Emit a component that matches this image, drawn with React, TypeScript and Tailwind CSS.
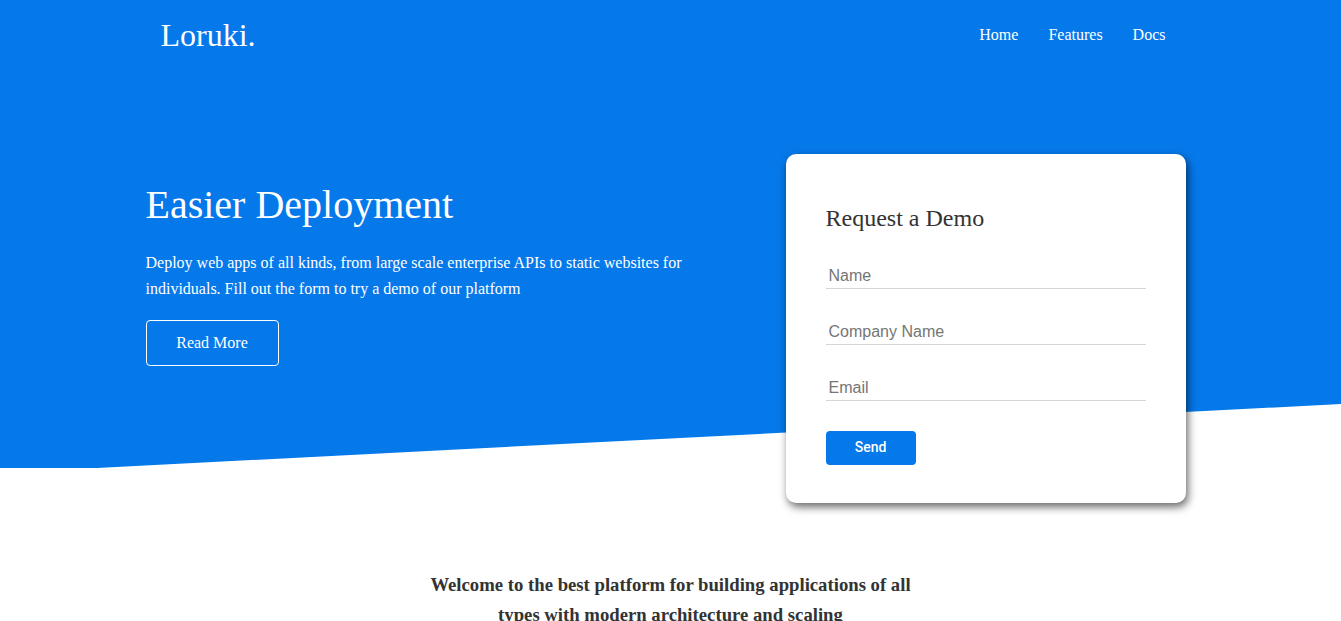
const serif = "font-['Liberation_Serif','Times_New_Roman',serif]";

function Navbar() {
  return (
    <header className="flex h-[65px] items-center justify-between pl-[15px] pr-[20px]">
      <h1 className="mt-[6px] text-[32px] leading-[1.2] text-white">Loruki.</h1>
      <nav className="mt-[4px]">
        <ul className="flex gap-[30px] text-[16px] leading-[1.2] text-white">
          <li>Home</li>
          <li>Features</li>
          <li>Docs</li>
        </ul>
      </nav>
    </header>
  );
}

function DemoForm() {
  const fields = ["Name", "Company Name", "Email"];
  return (
    <div className="w-[400px] shrink-0 rounded-[10px] bg-white px-[40px] pb-[38px] pt-[50px] shadow-[2px_4px_9px_rgba(0,0,0,0.6)]">
      <h2 className="text-[24px] leading-[28.8px] text-[#333]">Request a Demo</h2>
      <form className="mt-[31px] flex flex-col gap-[31px]" onSubmit={(e) => e.preventDefault()}>
        {fields.map((field) => (
          <input
            key={field}
            type="text"
            placeholder={field}
            className="w-full border-b border-[#d6d6d6] px-[3px] py-[3px] font-['Liberation_Sans',Arial,sans-serif] text-[16px] leading-[18px] text-[#333] outline-none placeholder:text-[#757575]"
          />
        ))}
      </form>
      <button className="mt-[30px] h-[34px] w-[90px] rounded-[4px] bg-[#0578ea] font-['Roboto',Arial,sans-serif] text-[14px] font-medium text-white">
        Send
      </button>
    </div>
  );
}

export default function App() {
  return (
    <div className={`${serif} min-h-[621px] bg-white`}>
      <section className="relative h-[468px]">
        <div className="absolute inset-0 bg-[#0578ea] [clip-path:polygon(0_0,100%_0,100%_404px,97px_468px,0_468px)]" />
        <div className="relative mx-auto w-[1040px] -translate-x-[5px]">
          <Navbar />
          <div className="mt-[89px] flex items-start justify-between">
            <div className="w-[560px] pt-[27px] text-white">
              <h2 className="text-[40px] leading-[48px]">Easier Deployment</h2>
              <p className="mt-[21px] text-[16px] leading-[25.6px]">
                Deploy web apps of all kinds, from large scale enterprise APIs to static websites for
                individuals. Fill out the form to try a demo of our platform
              </p>
              <button className="mt-[19px] h-[46px] w-[133px] rounded-[4px] border border-white text-[16px] text-white">
                Read More
              </button>
            </div>
            <DemoForm />
          </div>
        </div>
      </section>

      <section className="mx-auto mt-[102px] max-w-[500px] text-center">
        <h3 className="text-[18.72px] font-bold leading-[30px] text-[#333]">
          Welcome to the best platform for building applications of all types with modern
          architecture and scaling
        </h3>
      </section>
    </div>
  );
}
